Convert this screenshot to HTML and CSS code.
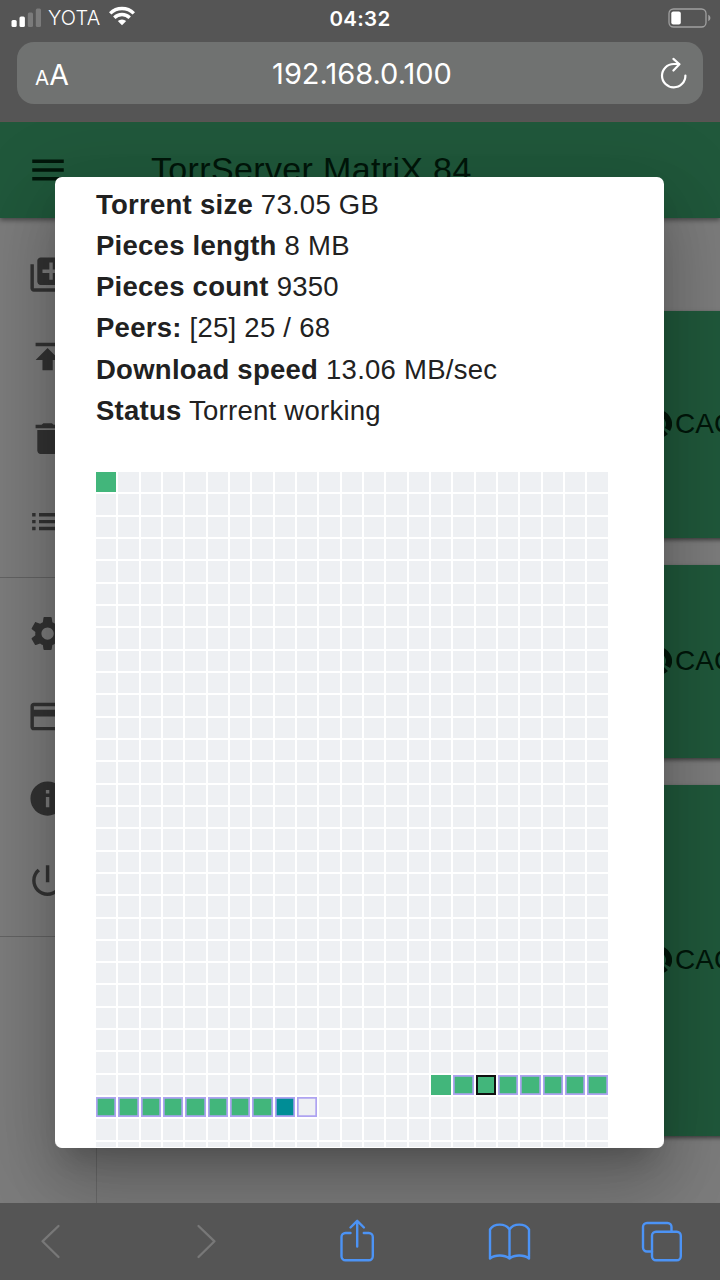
FILE: index.html
```html
<!DOCTYPE html>
<html lang="en">
<head>
    <meta charset="utf-8">
    <meta name="viewport" content="width=device-width, initial-scale=1" />
    <title>TorrServer MatriX 84</title>
    <link rel="stylesheet" href="styles.css">
</head>
<body>
    <div class="top">
        <div class="status">
            <div class="carrier">
                <svg width="30" height="20" viewBox="0 0 30 20">
                    <rect x="0.500" y="12" width="5.200" height="7" rx="1.5" fill="#fff" />
                    <rect x="8.500" y="8.500" width="5.400" height="10.500" rx="1.5" fill="#fff" />
                    <rect x="16.800" y="4.500" width="5.200" height="14.500" rx="1.5" fill="#7b7b7b" />
                    <rect x="24.800" y="0.500" width="5.200" height="18.500" rx="1.5" fill="#7b7b7b" />
                </svg>
                <span>YOTA</span>
                <svg class="wifi" width="26" height="20" viewBox="0 0 26 20" fill="none" stroke="#fff" stroke-width="3.400">
                    <path d="M1.200 7.400a16.700 16.700 0 0 1 23.600 0" />
                    <path d="M5.300 11.700a10.900 10.900 0 0 1 15.400 0" />
                    <path d="M13 19.300l-4.200-4.200a6 6 0 0 1 8.400 0z" fill="#fff" stroke="none" />
                </svg>
            </div>
            <div class="time">04:32</div>
            <div class="battery">
                <svg width="44" height="20" viewBox="0 0 44 20">
                    <rect x="1" y="1" width="37" height="18" rx="4.500" fill="none" stroke="#a0a0a0" stroke-width="1.300" />
                    <rect x="3.300" y="3.500" width="9.500" height="13" rx="2" fill="#fff" />
                    <path d="M40.300 6.800c2.800 1.400 2.800 5 0 6.400z" fill="#a0a0a0" />
                </svg>
            </div>
        </div>
        <div class="url">
            <div class="aa"><small>A</small>A</div>
            <div class="host">192.168.0.100</div>
            <svg class="reload" width="30" height="34" viewBox="0 0 30 34" fill="none" stroke="#fff" stroke-width="2.200" stroke-linecap="round" stroke-linejoin="round">
                <path d="M26.400 19.500A11.700 11.700 0 1 1 14.700 8h5.500" />
                <path d="M14.400 2.900l6 5.300-6 6.300" />
            </svg>
        </div>
    </div>

    <div class="page">
        <div class="header">
            <svg width="42" height="42" viewBox="0 0 24 24"><path d="M3 18h18v-2H3v2zm0-5h18v-2H3v2zm0-7v2h18V6H3z" /></svg>
            <h1>TorrServer MatriX 84</h1>
        </div>
        <div class="main">
            <div class="sidebar">
                <div class="list">
                    <div class="item"><svg viewBox="0 0 24 24"><path d="M4 6H2v14c0 1.100.9 2 2 2h14v-2H4V6zm16-4H8c-1.100 0-2 .9-2 2v12c0 1.100.9 2 2 2h12c1.100 0 2-.9 2-2V4c0-1.100-.9-2-2-2zm-1 9h-4v4h-2v-4H9V9h4V5h2v4h4v2z" /></svg></div>
                    <div class="item"><svg viewBox="0 0 24 24"><path d="M5 4v2h14V4H5zm0 10h4v6h6v-6h4l-7-7-7 7z" /></svg></div>
                    <div class="item"><svg viewBox="0 0 24 24"><path d="M6 19c0 1.100.9 2 2 2h8c1.100 0 2-.9 2-2V7H6v12zM19 4h-3.500l-1-1h-5l-1 1H5v2h14V4z" /></svg></div>
                    <div class="item"><svg viewBox="0 0 24 24"><path d="M3 13h2v-2H3v2zm0 4h2v-2H3v2zm0-8h2V7H3v2zm4 4h14v-2H7v2zm0 4h14v-2H7v2zM7 7v2h14V7H7z" /></svg></div>
                </div>
                <div class="list">
                    <div class="item"><svg viewBox="0 0 24 24"><path d="M19.140 12.940c.04-.3.06-.61.06-.94 0-.32-.02-.64-.07-.94l2.030-1.580c.18-.14.23-.41.12-.61l-1.920-3.320c-.12-.22-.37-.29-.59-.22l-2.390.96c-.5-.38-1.030-.7-1.620-.94l-.36-2.540c-.04-.24-.24-.41-.48-.41h-3.840c-.24 0-.43.17-.47.41l-.36 2.540c-.59.24-1.130.57-1.620.94l-2.390-.96c-.22-.08-.47 0-.59.22L2.740 8.870c-.12.21-.08.47.12.61l2.030 1.580c-.05.3-.09.63-.09.94s.02.64.07.94l-2.030 1.580c-.18.14-.23.41-.12.61l1.920 3.320c.12.22.37.29.59.22l2.390-.96c.5.38 1.030.7 1.620.94l.36 2.540c.05.24.24.41.48.41h3.840c.24 0 .44-.17.47-.41l.36-2.540c.59-.24 1.130-.56 1.620-.94l2.390.96c.22.08.47 0 .59-.22l1.920-3.320c.12-.22.07-.47-.12-.61l-2.010-1.580zM12 15.600c-1.980 0-3.600-1.620-3.600-3.600s1.620-3.600 3.600-3.600 3.600 1.620 3.600 3.600-1.620 3.600-3.600 3.600z" /></svg></div>
                    <div class="item"><svg viewBox="0 0 24 24"><path d="M20 4H4c-1.110 0-1.990.89-1.990 2L2 18c0 1.110.89 2 2 2h16c1.110 0 2-.89 2-2V6c0-1.110-.89-2-2-2zm0 14H4v-6h16v6zm0-10H4V6h16v2z" /></svg></div>
                    <div class="item"><svg viewBox="0 0 24 24"><path d="M12 2C6.480 2 2 6.480 2 12s4.480 10 10 10 10-4.480 10-10S17.520 2 12 2zm1 15h-2v-6h2v6zm0-8h-2V7h2v2z" /></svg></div>
                    <div class="item"><svg viewBox="0 0 24 24"><path d="M13 3h-2v10h2V3zm4.830 2.170l-1.420 1.420C17.990 7.860 19 9.810 19 12c0 3.870-3.130 7-7 7s-7-3.130-7-7c0-2.190 1.010-4.140 2.580-5.420L6.170 5.170C4.230 6.820 3 9.260 3 12c0 4.970 4.030 9 9 9s9-4.030 9-9c0-2.740-1.230-5.180-3.170-6.830z" /></svg></div>
                </div>
            </div>
            <div class="cards">
                <div class="card c1">
                    <svg width="28" height="30" viewBox="0 0 28 30" fill="none" stroke="#00160a" stroke-width="6"><path d="M14 4a11 11 0 0 1 9.500 16.500M21.800 22.800a11 11 0 1 1-7.800-18.800" /></svg><span>CACHE</span>
                </div>
                <div class="card c2">
                    <svg width="28" height="30" viewBox="0 0 28 30" fill="none" stroke="#00160a" stroke-width="6"><path d="M14 4a11 11 0 0 1 9.500 16.500M21.800 22.800a11 11 0 1 1-7.800-18.800" /></svg><span>CACHE</span>
                </div>
                <div class="card c3">
                    <svg width="28" height="30" viewBox="0 0 28 30" fill="none" stroke="#00160a" stroke-width="6"><path d="M14 4a11 11 0 0 1 9.500 16.500M21.800 22.800a11 11 0 1 1-7.800-18.800" /></svg><span>CACHE</span>
                </div>
            </div>
        </div>
    </div>

    <div class="dialog">
        <div class="info">
            <div><b>Torrent size</b> 73.05 GB</div>
            <div><b>Pieces length</b> 8 MB</div>
            <div><b>Pieces count</b> 9350</div>
            <div><b>Peers:</b> [25] 25 / 68</div>
            <div><b>Download speed</b> 13.06 MB/sec</div>
            <div><b>Status</b> Torrent working</div>
        </div>
        <div class="pieces" id="pieces"></div>
    </div>

    <div class="toolbar">
        <svg viewBox="0 0 80 60" class="off"><path d="M48.500 15L32.500 30.300 48.500 46" /></svg>
        <svg viewBox="0 0 80 60" class="off"><path d="M35.500 15l16 15.300L35.500 46" /></svg>
        <svg viewBox="0 0 80 60"><path d="M34.500 22h-5a4 4 0 0 0-4 4v19.300a4 4 0 0 0 4 4h23.300a4 4 0 0 0 4-4V26a4 4 0 0 0-4-4h-5M41.200 35.500V10M34.500 16.500l6.700-6.700 6.700 6.700" /></svg>
        <svg viewBox="0 0 80 60"><path d="M40.500 18.500v29c-5-4-14.500-4-19.500 0v-29c4-6.500 15.500-6.500 19.500 0c4-6.500 15.500-6.500 19.500 0v29c-5-4-14.500-4-19.500 0" /></svg>
        <svg viewBox="0 0 80 60"><rect x="30" y="20.800" width="28.800" height="28.500" rx="4" /><path d="M30 40.500h-5a4 4 0 0 1-4-4V16a4 4 0 0 1 4-4h20.500a4 4 0 0 1 4 4v4.500" /></svg>
    </div>

    <script>
        var COLS = 23, ROWS = 31;
        var reader = 27 * COLS + 17;
        var box = document.getElementById('pieces');
        for (var i = 0; i < COLS * ROWS; i++) {
            var cell = document.createElement('i');
            if (i == 0 || (i >= reader - 2 && i < reader + 14)) cell.className = 'full';
            if (i == reader + 14) cell.className = 'loading';
            if (i > reader - 2 && i <= reader + 15) cell.className += ' range';
            if (i == reader) cell.className = 'full reader';
            box.appendChild(cell);
        }
    </script>
</body>
</html>
```

FILE: styles.css
```css
* {
    box-sizing: border-box;
}

body {
    margin: 0;
    width: 720px;
    height: 1280px;
    overflow: hidden;
    display: flex;
    flex-direction: column;
    background: #7c7c7c;
    font-family: "Liberation Sans", Arial, sans-serif;
}

svg {
    display: block;
    flex: none;
}

/* browser chrome */
.top {
    position: relative;
    z-index: 3;
    height: 122px;
    padding: 0 17px;
    background: #555;
    border-bottom: 1px solid #5b5452;
    color: #fff;
    font-family: Inter, sans-serif;
}

.status {
    height: 42px;
    margin: 0 -9px 0 -6px;
    padding-bottom: 7px;
    display: grid;
    grid-template-columns: 1fr auto 1fr;
    align-items: center;
}

.carrier {
    display: flex;
    align-items: center;
    gap: 7px;
    font-size: 20px;
    font-weight: 300;
}

.carrier span {
    letter-spacing: 0.2px;
}

.wifi {
    margin: 0 0 3px 2px;
}

.time {
    font-size: 20.500px;
    font-weight: 600;
    letter-spacing: 0.3px;
    padding: 1px 3px 0 0;
}

.battery {
    justify-self: end;
}

.url {
    height: 62px;
    padding: 0 14px 0 18px;
    display: grid;
    grid-template-columns: 60px 1fr 60px;
    align-items: center;
    border-radius: 17px;
    background: #707271;
}

.aa {
    padding-top: 2px;
    font-size: 28.500px;
}

.aa small {
    font-size: 20.500px;
}

.host {
    padding-top: 1px;
    text-align: center;
    font-size: 29px;
}

.reload {
    justify-self: end;
}

/* dimmed page */
.page {
    flex: 1;
    min-height: 0;
    display: flex;
    flex-direction: column;
}

.header {
    position: relative;
    z-index: 1;
    height: 96px;
    padding-left: 27px;
    display: flex;
    align-items: center;
    gap: 82px;
    background: #20583b;
    box-shadow: 0 2px 5px rgba(0,0,0,.45);
}

.header svg {
    fill: #00160a;
}

h1 {
    margin: 0;
    padding-bottom: 2px;
    font-size: 34px;
    font-weight: normal;
    letter-spacing: 0.35px;
    color: #00160a;
}

.main {
    flex: 1;
    display: flex;
}

.sidebar {
    width: 97px;
    border-right: 1px solid #6a6a6a;
}

.list {
    padding: 15px 0 14px;
    border-bottom: 1px solid #636363;
}

.item {
    height: 82.400px;
    padding-left: 27px;
    display: flex;
    align-items: center;
}

.item svg {
    width: 41.200px;
    height: 41.200px;
    fill: #333;
}

.cards {
    width: 623px;
    padding: 92.500px 0 0 27px;
    overflow: hidden;
}

.card {
    width: 640px;
    margin-bottom: 26.500px;
    padding-left: 520px;
    display: flex;
    align-items: center;
    gap: 3px;
    background: #20583b;
    box-shadow: 0 2px 4px rgba(0,0,0,.5);
    color: #00160a;
    font-size: 28px;
}

.c1 {
    height: 227.500px;
}

.c2 {
    height: 193.500px;
}

.c3 {
    height: 351px;
}

/* torrent cache dialog */
.dialog {
    position: absolute;
    z-index: 2;
    left: 55px;
    top: 177px;
    width: 609px;
    height: 971px;
    padding: 7px 56px 0 41px;
    overflow: hidden;
    background: #fff;
    border-bottom: 1px solid #fff;
    border-radius: 7px;
    box-shadow: 0 19px 26px -12px rgba(0,0,0,.2), 0 41px 65px 5px rgba(0,0,0,.14), 0 15px 79px 14px rgba(0,0,0,.12);
}

.info {
    margin-bottom: 41px;
    color: #212121;
    font-size: 27.500px;
    line-height: 41.150px;
    letter-spacing: 0.26px;
}

.pieces {
    display: grid;
    grid-template-columns: repeat(23, 20.340px);
    grid-auto-rows: 20.330px;
    gap: 2px;
}

.pieces i {
    background: #eef0f3;
}

.pieces .full {
    background: #42b67b;
}

.pieces .loading {
    background: #008d96;
}

.pieces .range {
    box-shadow: inset 0 0 0 1.700px #aea3f1;
}

.pieces .reader {
    box-shadow: inset 0 0 0 2px #111;
}

.toolbar {
    position: relative;
    z-index: 3;
    height: 77px;
    padding: 8px 18px 0 10px;
    display: flex;
    justify-content: space-between;
    background: #555;
}

.toolbar svg {
    width: 80px;
    height: 60px;
    fill: none;
    stroke: #4c93f5;
    stroke-width: 2.400;
    stroke-linecap: round;
    stroke-linejoin: round;
}

.toolbar .off {
    stroke: #787878;
    stroke-width: 2.300;
}
```
